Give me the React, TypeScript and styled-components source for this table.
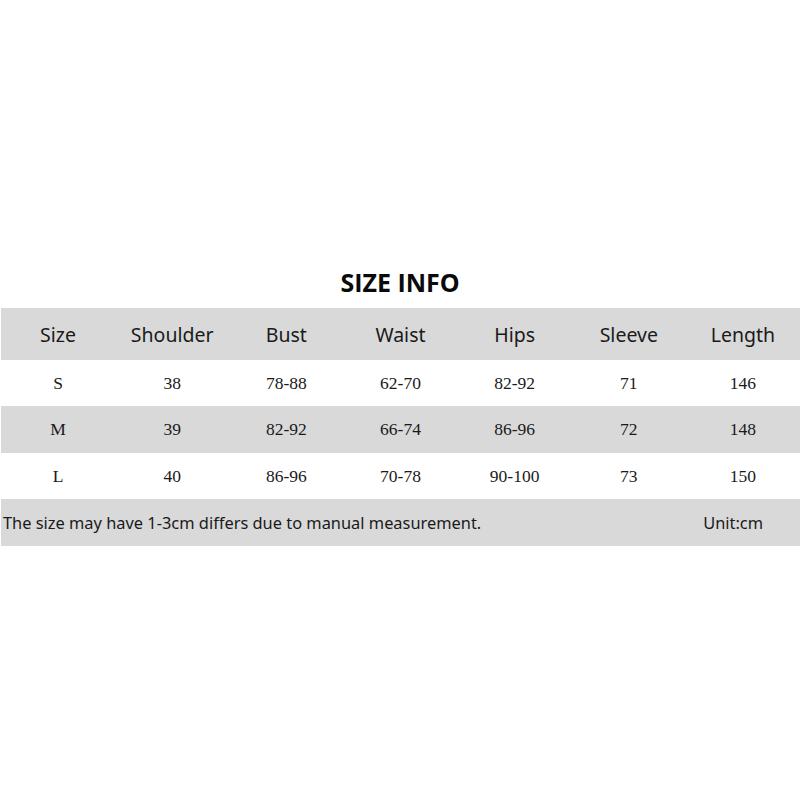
import React from "react";
import styled, { createGlobalStyle } from "styled-components";

const GlobalStyle = createGlobalStyle`
  html, body {
    margin: 0;
    padding: 0;
    background: #ffffff;
  }
`;

const Page = styled.div`
  width: 800px;
  height: 800px;
  padding-top: 264px;
  box-sizing: border-box;
  background: #ffffff;
  color: #111111;
`;

const Title = styled.h2`
  margin: 0;
  height: 44px;
  text-align: center;
  font-family: "Open Sans", "Noto Sans", sans-serif;
  font-weight: 700;
  font-size: 25px;
  line-height: 36px;
  color: #0a0a0a;
`;

const Table = styled.div`
  margin-left: 1px;
  display: flex;
  flex-direction: column;
`;

const Row = styled.div<{ $shaded?: boolean; $height: number }>`
  display: grid;
  grid-template-columns: repeat(7, 1fr);
  height: ${(p) => p.$height}px;
  align-items: center;
  background: ${(p) => (p.$shaded ? "#d9d9d9" : "#ffffff")};
`;

const HeadCell = styled.div`
  text-align: center;
  font-family: "Noto Sans", "Open Sans", sans-serif;
  font-size: 19.5px;
  color: #1a1a1a;
`;

const Cell = styled.div`
  text-align: center;
  font-family: "Liberation Serif", "Times New Roman", serif;
  font-size: 17.5px;
  color: #1a1a1a;
`;

const Note = styled.div`
  display: flex;
  align-items: center;
  justify-content: space-between;
  height: 47px;
  padding: 0 37px 0 2px;
  background: #d9d9d9;
  font-family: "Noto Sans", "Open Sans", sans-serif;
  font-size: 16.4px;
  color: #1a1a1a;
`;

const headers = ["Size", "Shoulder", "Bust", "Waist", "Hips", "Sleeve", "Length"];

const rows = [
  ["S", "38", "78-88", "62-70", "82-92", "71", "146"],
  ["M", "39", "82-92", "66-74", "86-96", "72", "148"],
  ["L", "40", "86-96", "70-78", "90-100", "73", "150"],
];

const App = () => {
  return (
    <>
      <GlobalStyle />
      <Page>
        <Title>SIZE INFO</Title>
        <Table>
          <Row $shaded $height={52}>
            {headers.map((h) => (
              <HeadCell key={h}>{h}</HeadCell>
            ))}
          </Row>
          {rows.map((r, i) => (
            <Row key={r[0]} $shaded={i % 2 === 1} $height={i === 1 ? 47 : 46}>
              {r.map((v, j) => (
                <Cell key={j}>{v}</Cell>
              ))}
            </Row>
          ))}
          <Note>
            <span>The size may have 1-3cm differs due to manual measurement.</span>
            <span>Unit:cm</span>
          </Note>
        </Table>
      </Page>
    </>
  );
};

export default App;
